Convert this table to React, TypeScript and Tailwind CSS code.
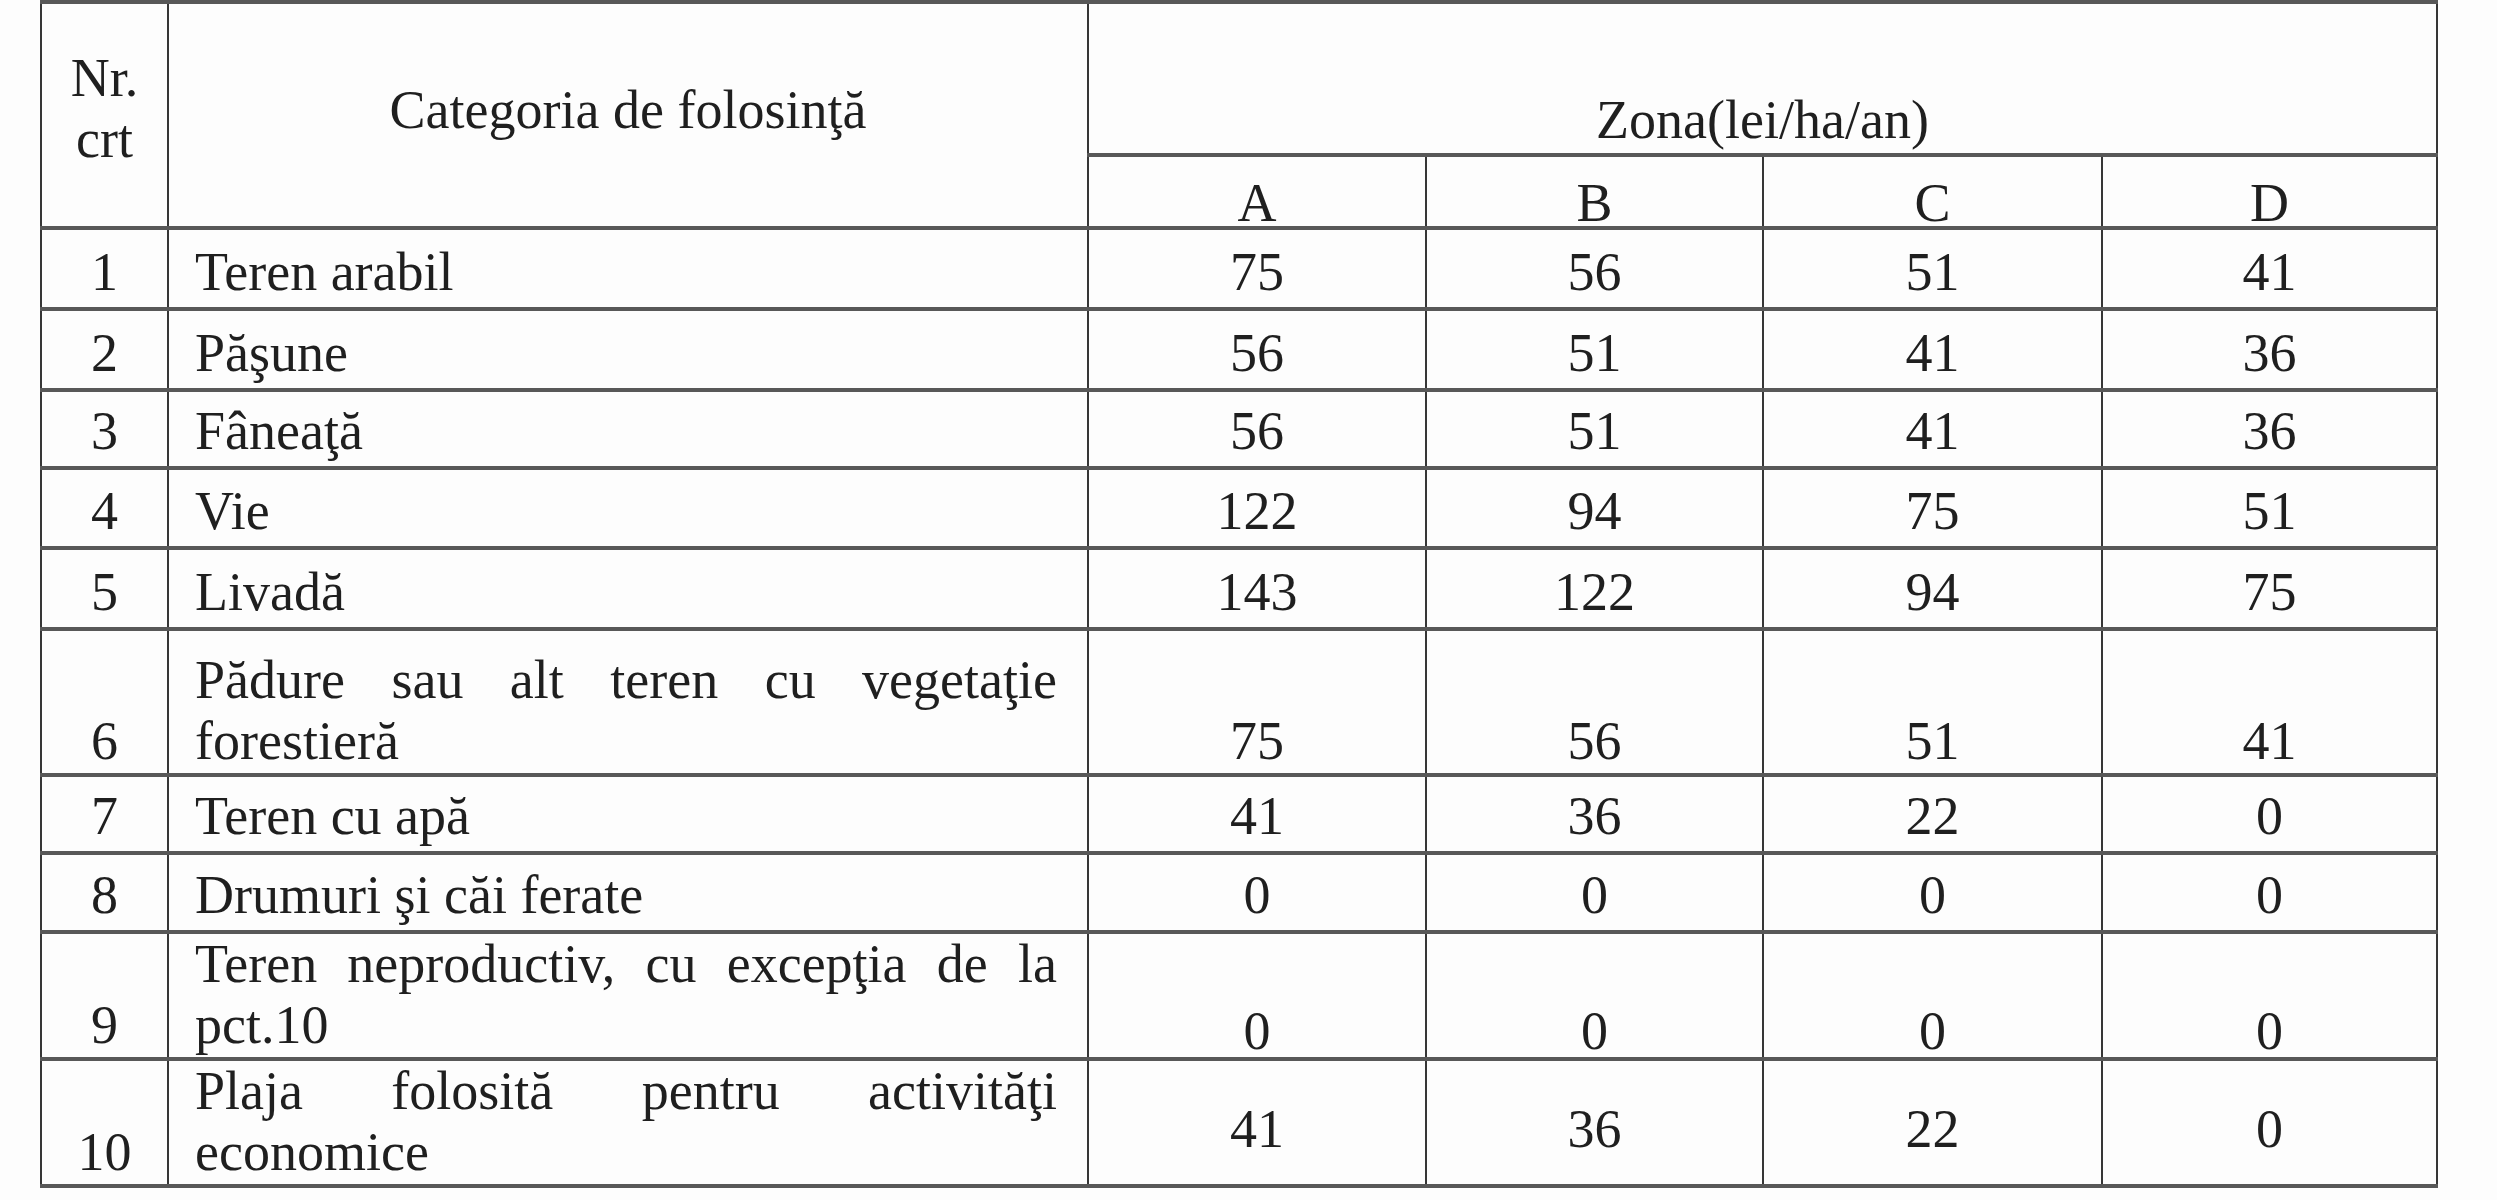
const rows = [
  { nr: 1, name: "Teren arabil", v: [75, 56, 51, 41], h: "h-[81px]", val: "align-bottom pb-[3px]" },
  { nr: 2, name: "Păşune", v: [56, 51, 41, 36], h: "h-[81px]", val: "align-bottom pb-[3px]" },
  { nr: 3, name: "Fâneaţă", v: [56, 51, 41, 36], h: "h-[78px]", val: "align-bottom pb-[3px]" },
  { nr: 4, name: "Vie", v: [122, 94, 75, 51], h: "h-[80px]", val: "align-bottom pb-[3px]" },
  { nr: 5, name: "Livadă", v: [143, 122, 94, 75], h: "h-[81px]", val: "align-bottom pb-[3px]" },
  { nr: 6, name: "Pădure sau alt teren cu vegetaţie forestieră", v: [75, 56, 51, 41], h: "h-[146px]", tall: true, val: "align-bottom pb-[1px]" },
  { nr: 7, name: "Teren cu apă", v: [41, 36, 22, 0], h: "h-[78px]", val: "align-bottom pb-[3px]" },
  { nr: 8, name: "Drumuri şi căi ferate", v: [0, 0, 0, 0], h: "h-[79px]", val: "align-bottom pb-[3px]" },
  { nr: 9, name: "Teren neproductiv, cu excepţia de la pct.10", v: [0, 0, 0, 0], h: "h-[127px]", tall: true, val: "align-bottom pb-[1px] leading-[50px]" },
  { nr: 10, name: "Plaja folosită pentru activităţi economice", v: [41, 36, 22, 0], h: "h-[127px]", tall: true, val: "align-middle pt-[14px] pb-0" },
];

const cell = "border-x-2 border-x-[#363636] border-y-4 border-y-[#585858] p-0";

export default function App() {
  return (
    <div className="min-h-screen w-[2497px] h-[1200px] overflow-hidden bg-[#fdfdfd] text-[#1f1f1f] font-['Liberation_Serif','Times_New_Roman',serif] text-[54px] leading-[63px]">
      <table className="ml-[40px] w-[2398px] table-fixed border-collapse">
        <colgroup>
          <col className="w-[127px]" />
          <col className="w-[920px]" />
          <col className="w-[338px]" />
          <col className="w-[337px]" />
          <col className="w-[339px]" />
          <col className="w-[335px]" />
        </colgroup>
        <thead>
          <tr className="h-[153px]">
            <th rowSpan={2} className={`${cell} align-middle text-center font-normal leading-[61px] pb-[12px]`}>
              Nr.
              <br />
              crt
            </th>
            <th rowSpan={2} className={`${cell} align-middle text-center font-normal pb-[10px]`}>
              Categoria de folosinţă
            </th>
            <th colSpan={4} className={`${cell} align-bottom text-center font-normal pb-[1px]`}>
              Zona(lei/ha/an)
            </th>
          </tr>
          <tr className="h-[73px]">
            {["A", "B", "C", "D"].map((z) => (
              <th key={z} className={`${cell} align-bottom text-center font-normal leading-[40px] pb-[3px]`}>
                {z}
              </th>
            ))}
          </tr>
        </thead>
        <tbody>
          {rows.map((r) => (
            <tr key={r.nr} className={`${r.h} ${r.tall ? "leading-[61px]" : ""}`}>
              <td className={`${cell} align-bottom text-center ${r.tall ? "pb-[1px]" : "pb-[3px]"}`}>{r.nr}</td>
              <td className={`${cell} align-bottom text-justify pl-[26px] pr-[30px] ${r.tall ? "pb-[1px]" : "pb-[3px]"}`}>
                {r.name}
              </td>
              {r.v.map((x, i) => (
                <td key={i} className={`${cell} text-center ${r.val}`}>
                  {x}
                </td>
              ))}
            </tr>
          ))}
        </tbody>
      </table>
    </div>
  );
}
